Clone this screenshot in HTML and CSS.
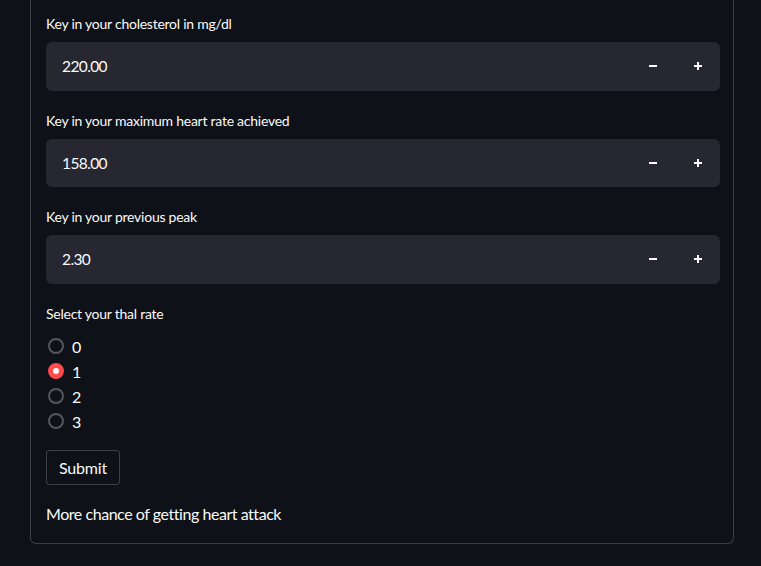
FILE: index.html
```html
<!DOCTYPE html>
<html>
<head>
<meta charset="utf-8">
<link rel="stylesheet" href="styles.css">
</head>
<body>
<div class="form">
  <div class="field">
    <label class="label">Key in your cholesterol in mg/dl</label>
    <div class="num">
      <div class="num-value">220.00</div>
      <div class="steps">
        <button class="step"><svg width="10" height="10" viewBox="0 0 10 10"><rect x="1" y="4" width="8" height="2" fill="#fafafa"/></svg></button>
        <button class="step"><svg width="10" height="10" viewBox="0 0 10 10"><rect x="1" y="4" width="8" height="2" fill="#fafafa"/><rect x="4" y="1" width="2" height="8" fill="#fafafa"/></svg></button>
      </div>
    </div>
  </div>
  <div class="field">
    <label class="label">Key in your maximum heart rate achieved</label>
    <div class="num">
      <div class="num-value">158.00</div>
      <div class="steps">
        <button class="step"><svg width="10" height="10" viewBox="0 0 10 10"><rect x="1" y="4" width="8" height="2" fill="#fafafa"/></svg></button>
        <button class="step"><svg width="10" height="10" viewBox="0 0 10 10"><rect x="1" y="4" width="8" height="2" fill="#fafafa"/><rect x="4" y="1" width="2" height="8" fill="#fafafa"/></svg></button>
      </div>
    </div>
  </div>
  <div class="field">
    <label class="label">Key in your previous peak</label>
    <div class="num">
      <div class="num-value">2.30</div>
      <div class="steps">
        <button class="step"><svg width="10" height="10" viewBox="0 0 10 10"><rect x="1" y="4" width="8" height="2" fill="#fafafa"/></svg></button>
        <button class="step"><svg width="10" height="10" viewBox="0 0 10 10"><rect x="1" y="4" width="8" height="2" fill="#fafafa"/><rect x="4" y="1" width="2" height="8" fill="#fafafa"/></svg></button>
      </div>
    </div>
  </div>
  <div class="field">
    <label class="label">Select your thal rate</label>
    <div class="radios">
      <div class="radio"><span class="dot"></span><span>0</span></div>
      <div class="radio"><span class="dot on"></span><span>1</span></div>
      <div class="radio"><span class="dot"></span><span>2</span></div>
      <div class="radio"><span class="dot"></span><span>3</span></div>
    </div>
  </div>
  <div><button class="submit">Submit</button></div>
  <p class="result">More chance of getting heart attack</p>
</div>
</body>
</html>
```

FILE: styles.css
```css
html, body {
  margin: 0;
  padding: 0;
  background: #0e1117;
}
body {
  font-family: Lato, "Noto Sans", sans-serif;
  color: #fafafa;
  height: 566px;
  overflow: hidden;
}
.form {
  margin-left: 30px;
  width: 704px;
  box-sizing: border-box;
  border: 1px solid rgba(250, 250, 250, 0.2);
  border-top: none;
  border-radius: 0 0 6px 6px;
  padding: 10px 13px 17px 15px;
  display: flex;
  flex-direction: column;
  gap: 16px;
}
.field {
  display: flex;
  flex-direction: column;
}
.label {
  font-size: 14px;
  letter-spacing: -0.25px;
  line-height: 24px;
  height: 24px;
  padding-top: 2px;
  margin-bottom: 6px;
}
.num {
  height: 48.5px;
  background: #262730;
  border-radius: 6px;
  display: flex;
  align-items: center;
}
.num-value {
  flex: 1;
  padding-left: 16px;
  font-size: 15.5px;
  letter-spacing: -0.6px;
}
.steps {
  display: flex;
  width: 89px;
  height: 100%;
}
.step {
  flex: 1;
  background: transparent;
  border: none;
  padding: 0;
  display: flex;
  align-items: center;
  justify-content: center;
}
.radios {
  padding-top: 2px;
  display: flex;
  flex-direction: column;
}
.radio {
  height: 25.1px;
  display: flex;
  align-items: center;
  gap: 8px;
  font-size: 16px;
  padding-left: 2px;
}
.dot {
  width: 16px;
  height: 16px;
  box-sizing: border-box;
  border: 2px solid rgba(250, 250, 250, 0.3);
  border-radius: 50%;
  display: inline-flex;
  align-items: center;
  justify-content: center;
}
.dot.on {
  background: #ff4b4b;
  border-color: #ff4b4b;
}
.dot.on::after {
  content: "";
  width: 6px;
  height: 6px;
  border-radius: 50%;
  background: #fafafa;
}
.submit {
  height: 35.5px;
  padding: 0 12px;
  background: #0e1117;
  border: 1px solid rgba(250, 250, 250, 0.2);
  border-radius: 4px;
  color: #fafafa;
  font-family: inherit;
  font-size: 16px;
  letter-spacing: -0.2px;
}
.result {
  margin: 0;
  padding-top: 1px;
  font-size: 16px;
  letter-spacing: -0.45px;
  line-height: 24px;
}
```
